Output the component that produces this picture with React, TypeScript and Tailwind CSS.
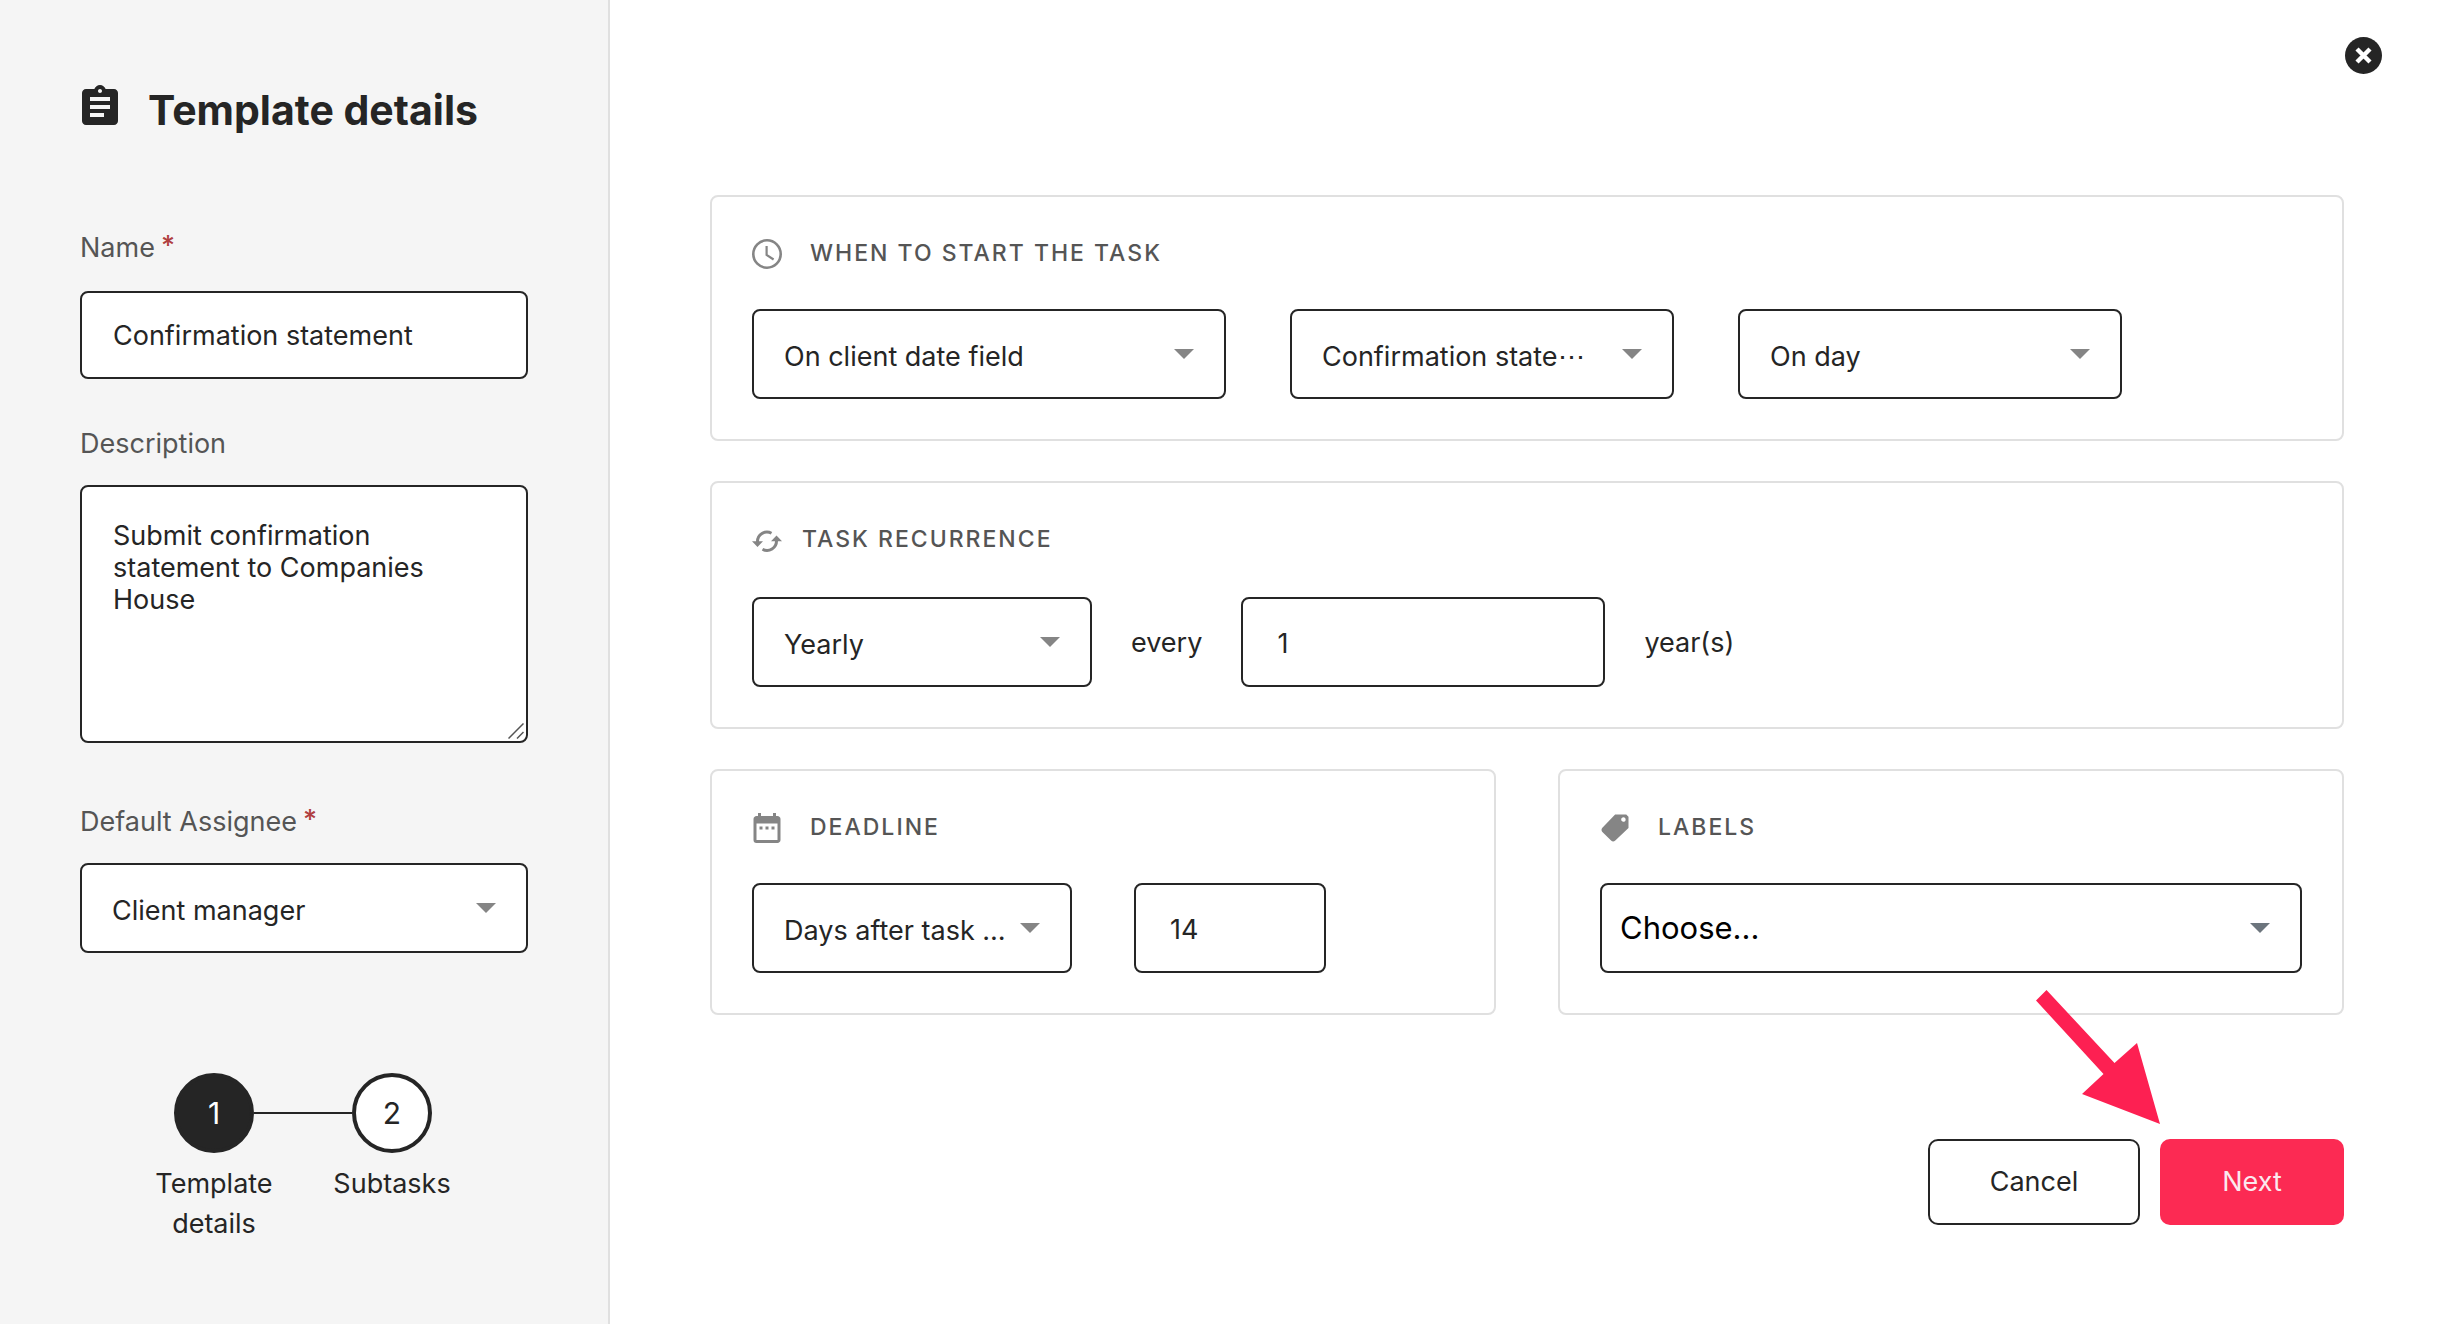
import { useState, type ReactNode } from 'react';
import { MdAssignment, MdDateRange } from 'react-icons/md';
import { IoMdPricetag } from 'react-icons/io';

const CONTROL = 'w-full rounded-lg border-2 border-[#252525] bg-white text-[27px] text-[#252525] outline-none';

export default function App() {
  const [name, setName] = useState('Confirmation statement');
  const [description, setDescription] = useState('Submit confirmation statement to Companies House');
  const [interval, setRecurrence] = useState('1');
  const [days, setDays] = useState('14');

  return (
    <div className="flex min-h-screen bg-white font-['Inter',sans-serif] text-[27px] leading-10 text-[#252525]">
      <aside className="w-[610px] shrink-0 border-r-2 border-[#e0e0e0] bg-[#f5f5f5] px-20 pt-[83px]">
        <div className="flex items-start gap-6">
          <MdAssignment className="-ml-1 size-12 shrink-0" />
          <h1 className="text-[41px] leading-[54px] font-bold whitespace-nowrap">Template details</h1>
        </div>

        <FieldLabel htmlFor="name" required className="mt-[91px] mb-[23px]">Name</FieldLabel>
        <input
          id="name"
          value={name}
          onChange={(e) => setName(e.target.value)}
          className={`${CONTROL} h-[88px] px-[31px]`}
        />

        <FieldLabel htmlFor="description" className="mt-[45px] mb-[21px]">Description</FieldLabel>
        <div className="relative">
          <textarea
            id="description"
            value={description}
            onChange={(e) => setDescription(e.target.value)}
            className={`${CONTROL} block h-[258px] resize-none px-[31px] pt-[33px] leading-8`}
          />
          <svg className="absolute right-1 bottom-1 size-4" viewBox="0 0 16 16" stroke="#555" strokeWidth="1.5" fill="none">
            <path d="M0.5 15.5L15.5 0.5M9 15.5L15.5 9" />
          </svg>
        </div>

        <FieldLabel htmlFor="assignee" required className="mt-[59px] mb-[21px]">Default Assignee</FieldLabel>
        <SelectBox id="assignee" options={['Client manager']} />

        <ol className="mt-[120px] ml-[45px] flex">
          <Step number={1} label="Template details" active position="first" />
          <Step number={2} label="Subtasks" position="last" />
        </ol>
      </aside>

      <main className="flex min-w-0 flex-1 flex-col pt-[37px] pr-[99px] pb-[99px] pl-[100px]">
        <button type="button" aria-label="Close" className="-mr-[38px] self-end">
          <svg className="size-[37px]" viewBox="0 0 37 37">
            <circle cx="18.5" cy="18.5" r="18.5" fill="#252525" />
            <path d="M12 12L25 25M25 12L12 25" stroke="#fff" strokeWidth="4.4" />
          </svg>
        </button>

        <div className="mt-[121px] flex flex-col gap-10">
          <Card icon={<ClockIcon />} title="When to start the task">
            <div className="flex gap-16">
              <SelectBox label="Start trigger" options={['On client date field']} className="w-[474px]" />
              <SelectBox label="Client date field" options={['Confirmation state⋯']} className="w-[384px]" />
              <SelectBox label="Start offset" options={['On day']} className="w-[384px]" />
            </div>
          </Card>

          <Card icon={<RecurIcon />} title="Task recurrence" tight>
            <div className="flex items-center gap-[39px]">
              <SelectBox label="Frequency" options={['Yearly']} className="w-[340px]" />
              <label htmlFor="interval" className="pt-[2px]">every</label>
              <div className="w-[364px]">
                <input
                  id="interval"
                  value={interval}
                  onChange={(e) => setRecurrence(e.target.value)}
                  className={`${CONTROL} block h-[90px] px-[34px] pt-[2px]`}
                />
              </div>
              <span className="pt-[2px]">year(s)</span>
            </div>
          </Card>

          <div className="grid grid-cols-2 gap-[62px]">
            <Card icon={<MdDateRange className="-m-[3px] size-9" />} title="Deadline">
              <div className="flex gap-[62px]">
                <SelectBox label="Deadline rule" options={['Days after task …']} className="w-80" />
                <div className="w-48">
                  <input
                    aria-label="Number of days"
                    value={days}
                    onChange={(e) => setDays(e.target.value)}
                    className={`${CONTROL} block h-[90px] px-[34px] pt-[2px]`}
                  />
                </div>
              </div>
            </Card>
            <Card icon={<IoMdPricetag className="-m-[3px] size-9" />} title="Labels">
              <SelectBox label="Labels" options={['Choose...']} large />
            </Card>
          </div>
        </div>

        <div className="relative mt-[124px] flex justify-end gap-5">
          <button type="button" className="h-[86px] w-[212px] rounded-[10px] border-2 border-[#252525] bg-white">
            Cancel
          </button>
          <button type="button" className="h-[86px] w-[184px] rounded-[10px] bg-[#fc2a53] text-[#fbe9ee]">
            Next
          </button>
          <PointerArrow />
        </div>
      </main>
    </div>
  );
}

function FieldLabel({
  htmlFor, required, className, children,
}: {
  htmlFor: string;
  required?: boolean;
  className: string;
  children: ReactNode;
}) {
  return (
    <label htmlFor={htmlFor} className={`flex gap-[6px] text-[#555] ${className}`}>
      {children}
      {required && <span className="leading-9 font-medium text-[#b04040]">*</span>}
    </label>
  );
}

function SelectBox({
  id, label, options, large, className = '',
}: {
  id?: string;
  label?: string;
  options: string[];
  large?: boolean;
  className?: string;
}) {
  return (
    <div className={`relative ${className}`}>
      <select
        id={id}
        aria-label={label}
        className={
          large
            ? 'block h-[90px] w-full appearance-none rounded-lg border-2 border-[#252525] bg-white pr-16 pl-[18px] text-[31px] text-black outline-none'
            : `${CONTROL} block h-[90px] appearance-none pt-[6px] pr-10 pl-[30px]`
        }
      >
        {options.map((o) => (
          <option key={o}>{o}</option>
        ))}
      </select>
      <svg
        className={`pointer-events-none absolute top-10 right-8 h-[10px] w-5 ${large ? 'fill-[#6c757d]' : 'fill-[#858585]'}`}
        viewBox="0 0 20 10"
      >
        <path d="M0 0h20L10 10z" />
      </svg>
    </div>
  );
}

function Card({
  icon, title, tight, children,
}: {
  icon: ReactNode;
  title: string;
  tight?: boolean;
  children: ReactNode;
}) {
  return (
    <section className="rounded-lg border-2 border-[#e0e0e0] px-10 pt-[42px] pb-10">
      <div className={`flex items-start text-[#858585] ${tight ? 'mb-[42px] gap-5' : 'mb-10 gap-7'}`}>
        <div className="size-[30px] shrink-0">{icon}</div>
        <h2 className="text-[23px] leading-7 font-medium tracking-[2px] text-[#555] uppercase">{title}</h2>
      </div>
      {children}
    </section>
  );
}

function Step({
  number, label, active, position,
}: {
  number: number;
  label: string;
  active?: boolean;
  position: 'first' | 'last';
}) {
  return (
    <li className="w-[178px]">
      <div className="flex items-center">
        <div className={`h-[2px] flex-1 ${position === 'first' ? '' : 'bg-[#252525]'}`} />
        <div
          className={`flex size-20 items-center justify-center rounded-full border-4 border-[#252525] text-[30px] ${
            active ? 'bg-[#252525] text-white' : 'bg-white'
          }`}
        >
          {number}
        </div>
        <div className={`h-[2px] flex-1 ${position === 'last' ? '' : 'bg-[#252525]'}`} />
      </div>
      <p className="mt-[11px] px-2 text-center">{label}</p>
    </li>
  );
}

function ClockIcon() {
  return (
    <svg className="size-[30px]" viewBox="0 0 30 30" fill="none" stroke="currentColor">
      <circle cx="15" cy="15" r="13.7" strokeWidth="2.6" />
      <path d="M14.6 7v9l7 4.5" strokeWidth="2.2" />
    </svg>
  );
}

function RecurIcon() {
  return (
    <svg className="size-[30px]" viewBox="0 0 30 30">
      <path d="M5.500 17A9.500 9.500 0 0 1 19.500 8.300M24.500 15.500A9.500 9.500 0 0 1 10.500 24.200" fill="none" stroke="currentColor" strokeWidth="3" />
      <path d="M0 16.200h11L5.500 22zM19 16.200h11L24.500 10.500z" fill="currentColor" />
    </svg>
  );
}

// Callout pointing at the Next button
function PointerArrow() {
  return (
    <svg
      className="pointer-events-none absolute right-[184px] bottom-[101px] h-[134px] w-[124px] fill-[#fd2052]"
      viewBox="0 0 124 134"
    >
      <path d="M10.500 0L0 10.500L67.500 84L46 104L124 134L101 53L78.500 73z" />
    </svg>
  );
}
